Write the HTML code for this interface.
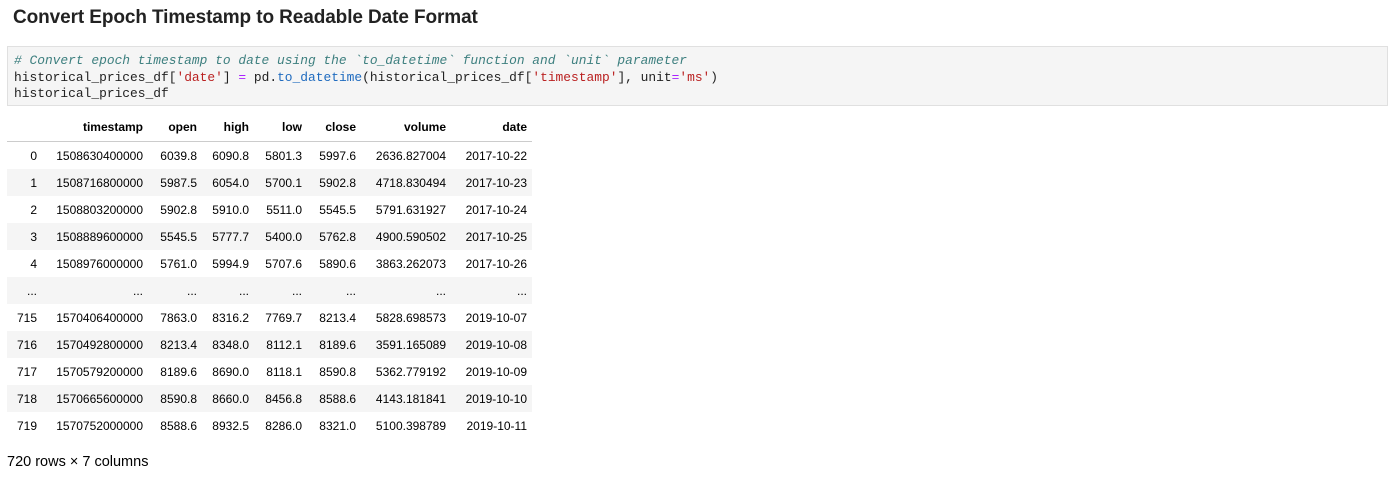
<!DOCTYPE html>
<html><head><meta charset="utf-8"><style>
body{margin:0;background:#fff;font-family:"Liberation Sans",sans-serif;color:#000;width:1396px;height:486px;overflow:hidden;position:relative}
h1{position:absolute;left:13px;top:7px;margin:0;font-size:19px;font-weight:bold;color:#222;letter-spacing:-0.1px}
.code{position:absolute;left:7px;top:46px;width:1381px;height:60px;background:#f5f5f5;border:1px solid #e0e0e0;box-sizing:border-box;padding:6px 0 0 6px;font-family:"Liberation Mono",monospace;font-size:12.9px;line-height:16.5px;white-space:pre;color:#222}
.c{color:#3d7f7f;font-style:italic}.s{color:#ba2121}.f{color:#1f6bbf}.o{color:#aa22ff}
table{position:absolute;left:7px;top:113px;border-collapse:collapse;font-size:12px;table-layout:fixed}
td,th{text-align:right;padding:0 5px 0 0;height:27px;white-space:nowrap}
th{font-weight:bold;height:28px;border-bottom:1px solid #ccc}
.foot{position:absolute;left:7px;top:454px;font-size:14.5px}
</style></head><body>
<h1>Convert Epoch Timestamp to Readable Date Format</h1>
<div class="code"><span class="c"># Convert epoch timestamp to date using the `to_datetime` function and `unit` parameter</span>
historical_prices_df[<span class="s">'date'</span>] <span class="o">=</span> pd.<span class="f">to_datetime</span>(historical_prices_df[<span class="s">'timestamp'</span>], unit<span class="o">=</span><span class="s">'ms'</span>)
historical_prices_df</div>
<table>
<colgroup><col style="width:35px"><col style="width:106px"><col style="width:54px"><col style="width:52px"><col style="width:53px"><col style="width:54px"><col style="width:90px"><col style="width:81px"></colgroup>
<thead><tr><th></th><th>timestamp</th><th>open</th><th>high</th><th>low</th><th>close</th><th>volume</th><th>date</th></tr></thead>
<tbody>
<tr style="background:#fff"><td>0</td><td>1508630400000</td><td>6039.8</td><td>6090.8</td><td>5801.3</td><td>5997.6</td><td>2636.827004</td><td>2017-10-22</td></tr>
<tr style="background:#f5f5f5"><td>1</td><td>1508716800000</td><td>5987.5</td><td>6054.0</td><td>5700.1</td><td>5902.8</td><td>4718.830494</td><td>2017-10-23</td></tr>
<tr style="background:#fff"><td>2</td><td>1508803200000</td><td>5902.8</td><td>5910.0</td><td>5511.0</td><td>5545.5</td><td>5791.631927</td><td>2017-10-24</td></tr>
<tr style="background:#f5f5f5"><td>3</td><td>1508889600000</td><td>5545.5</td><td>5777.7</td><td>5400.0</td><td>5762.8</td><td>4900.590502</td><td>2017-10-25</td></tr>
<tr style="background:#fff"><td>4</td><td>1508976000000</td><td>5761.0</td><td>5994.9</td><td>5707.6</td><td>5890.6</td><td>3863.262073</td><td>2017-10-26</td></tr>
<tr style="background:#f5f5f5"><td>...</td><td>...</td><td>...</td><td>...</td><td>...</td><td>...</td><td>...</td><td>...</td></tr>
<tr style="background:#fff"><td>715</td><td>1570406400000</td><td>7863.0</td><td>8316.2</td><td>7769.7</td><td>8213.4</td><td>5828.698573</td><td>2019-10-07</td></tr>
<tr style="background:#f5f5f5"><td>716</td><td>1570492800000</td><td>8213.4</td><td>8348.0</td><td>8112.1</td><td>8189.6</td><td>3591.165089</td><td>2019-10-08</td></tr>
<tr style="background:#fff"><td>717</td><td>1570579200000</td><td>8189.6</td><td>8690.0</td><td>8118.1</td><td>8590.8</td><td>5362.779192</td><td>2019-10-09</td></tr>
<tr style="background:#f5f5f5"><td>718</td><td>1570665600000</td><td>8590.8</td><td>8660.0</td><td>8456.8</td><td>8588.6</td><td>4143.181841</td><td>2019-10-10</td></tr>
<tr style="background:#fff"><td>719</td><td>1570752000000</td><td>8588.6</td><td>8932.5</td><td>8286.0</td><td>8321.0</td><td>5100.398789</td><td>2019-10-11</td></tr>
</tbody></table>
<div class="foot">720 rows × 7 columns</div>
</body></html>
